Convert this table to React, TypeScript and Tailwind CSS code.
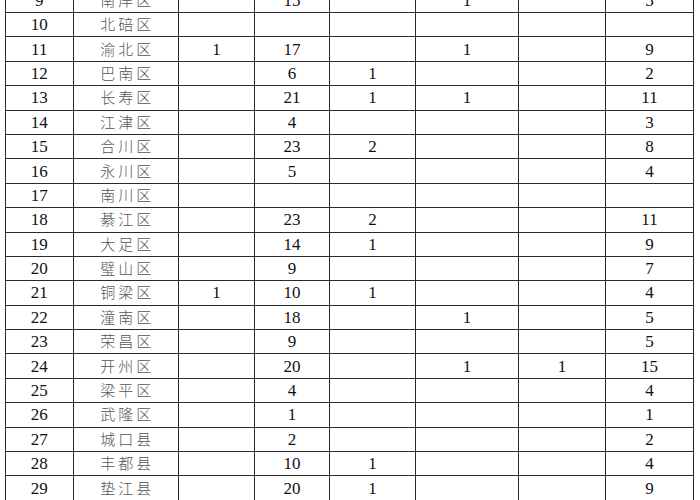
import React from 'react';

type Row = [string, string, string, string, string, string, string, string];

const rows: Row[] = [
  ['9', '南岸区', '', '15', '', '1', '', '5'],
  ['10', '北碚区', '', '', '', '', '', ''],
  ['11', '渝北区', '1', '17', '', '1', '', '9'],
  ['12', '巴南区', '', '6', '1', '', '', '2'],
  ['13', '长寿区', '', '21', '1', '1', '', '11'],
  ['14', '江津区', '', '4', '', '', '', '3'],
  ['15', '合川区', '', '23', '2', '', '', '8'],
  ['16', '永川区', '', '5', '', '', '', '4'],
  ['17', '南川区', '', '', '', '', '', ''],
  ['18', '綦江区', '', '23', '2', '', '', '11'],
  ['19', '大足区', '', '14', '1', '', '', '9'],
  ['20', '璧山区', '', '9', '', '', '', '7'],
  ['21', '铜梁区', '1', '10', '1', '', '', '4'],
  ['22', '潼南区', '', '18', '', '1', '', '5'],
  ['23', '荣昌区', '', '9', '', '', '', '5'],
  ['24', '开州区', '', '20', '', '1', '1', '15'],
  ['25', '梁平区', '', '4', '', '', '', '4'],
  ['26', '武隆区', '', '1', '', '', '', '1'],
  ['27', '城口县', '', '2', '', '', '', '2'],
  ['28', '丰都县', '', '10', '1', '', '', '4'],
  ['29', '垫江县', '', '20', '1', '', '', '9'],
];

// column widths, written out so tailwind picks them up
const colClass = [
  'w-[67.5px]',
  'w-[105.5px]',
  'w-[76px]',
  'w-[75px]',
  'w-[86px]',
  'w-[103px]',
  'w-[87px]',
  'w-[88px]',
];

export default function App() {
  return (
    <div className="w-[700px] h-[500px] overflow-hidden bg-white">
      <table className="ml-[5px] -mt-[12.4px] w-[688px] table-fixed border-collapse text-[17px] text-[#111] font-['Liberation_Serif','Times_New_Roman',serif]">
        <colgroup>
          {colClass.map((c, i) => (
            <col key={i} className={c} />
          ))}
        </colgroup>
        <tbody>
          {rows.map((row, key) => (
            <tr key={key} className="h-[24.4px]">
              {row.map((cell, i) => (
                <td
                  key={i}
                  align="center"
                  className="border border-[#2a2a2a] p-0 leading-none align-middle"
                >
                  {i === 1 ? (
                    <span className="pl-[3px] text-[15px] tracking-[3px] font-light text-[#555] font-['Noto_Sans_CJK_SC',sans-serif]">
                      {cell}
                    </span>
                  ) : (
                    cell
                  )}
                </td>
              ))}
            </tr>
          ))}
        </tbody>
      </table>
    </div>
  );
}
